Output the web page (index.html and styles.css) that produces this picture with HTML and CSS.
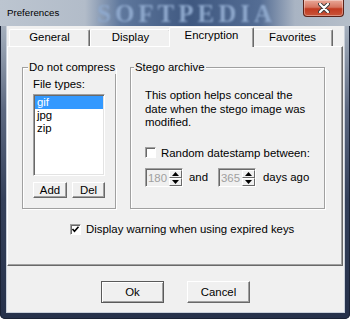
FILE: index.html
```html
<!DOCTYPE html>
<html>
<head>
<meta charset="utf-8">
<link rel="stylesheet" href="styles.css">
</head>
<body>
<div class="window">
  <div class="titlebar">
    <span class="title">Preferences</span>
    <span class="watermark">SOFTPEDIA</span>
    <div class="close">
      <svg width="12" height="10" viewBox="0 0 12 10">
        <path d="M2 1 L10 9 M10 1 L2 9" stroke="#3a3a3a" stroke-width="4" stroke-linecap="round"/>
        <path d="M2 1 L10 9 M10 1 L2 9" stroke="#fff" stroke-width="2.2" stroke-linecap="round"/>
      </svg>
    </div>
  </div>
  <div class="client">
    <div class="tabs">
      <div class="tab">General</div>
      <div class="tab">Display</div>
      <div class="tab active">Encryption</div>
      <div class="tab">Favorites</div>
    </div>
    <div class="panel">
      <div class="groups">
        <fieldset class="group g1">
          <legend>Do not compress</legend>
          <div class="g1-inner">
            <div class="lbl">File types:</div>
            <div class="listbox">
              <div class="item sel">gif</div>
              <div class="item">jpg</div>
              <div class="item">zip</div>
            </div>
            <div class="btnrow">
              <div class="btn add">Add</div>
              <div class="btn del">Del</div>
            </div>
          </div>
        </fieldset>
        <fieldset class="group g2">
          <legend>Stego archive</legend>
          <div class="g2-inner">
            <p class="desc">This option helps conceal the date when the stego image was modified.</p>
            <div class="cb-row">
              <span class="box"></span>
              <span>Random datestamp between:</span>
            </div>
            <div class="spin-row">
              <div class="spin">
                <span class="val">180</span>
                <span class="arrows">
                  <span class="arr"><svg width="7" height="4" viewBox="0 0 7 4"><path d="M0 4 L3.5 0 L7 4Z" fill="#000"/></svg></span>
                  <span class="arr"><svg width="7" height="4" viewBox="0 0 7 4"><path d="M0 0 L3.5 4 L7 0Z" fill="#000"/></svg></span>
                </span>
              </div>
              <span class="and">and</span>
              <div class="spin second">
                <span class="val">365</span>
                <span class="arrows">
                  <span class="arr"><svg width="7" height="4" viewBox="0 0 7 4"><path d="M0 4 L3.5 0 L7 4Z" fill="#000"/></svg></span>
                  <span class="arr"><svg width="7" height="4" viewBox="0 0 7 4"><path d="M0 0 L3.5 4 L7 0Z" fill="#000"/></svg></span>
                </span>
              </div>
              <span class="ago">days ago</span>
            </div>
          </div>
        </fieldset>
      </div>
      <div class="warn-row">
        <span class="box checked"><svg width="9" height="9" viewBox="0 0 9 9"><path d="M1.5 4 L3.5 6.2 L7.5 1.8" stroke="#000" stroke-width="1.6" fill="none"/></svg></span>
        <span>Display warning when using expired keys</span>
      </div>
    </div>
    <div class="footer">
      <div class="dlg-btn ok">Ok</div>
      <div class="dlg-btn cancel">Cancel</div>
    </div>
  </div>
</div>
</body>
</html>
```
FILE: styles.css
```css
html, body {
  margin: 0;
  padding: 0;
  background: #fff;
}
body {
  font-family: "Liberation Sans", Arial, sans-serif;
  font-size: 11.4px;
  color: #000;
}
.window {
  width: 350px;
  height: 319px;
  box-sizing: border-box;
  display: flex;
  flex-direction: column;
  padding: 0 6px 7px 7px;
  background: linear-gradient(180deg, #b9c2cd 0px, #9aa5b4 40px, #5c6880 110px, #34405a 200px, #26314a 319px);
  box-shadow: inset 0 0 0 1px #1a2235;
  border-radius: 0 0 5px 5px;
}
.titlebar {
  height: 26px;
  margin: 0 -6px 0 -7px;
  padding-left: 7px;
  display: flex;
  align-items: flex-start;
  position: relative;
  background: linear-gradient(90deg, #bcc5d0 0px, #b2bcc9 85px, #5f789d 120px, #3f5880 190px, #546d94 260px, #a9b4c3 295px, #b5bec9 350px);
}
.title {
  font-size: 9.7px;
  line-height: 26px;
  position: relative;
  z-index: 1;
}
.watermark {
  position: absolute;
  left: 97px;
  top: 1px;
  height: 25px;
  line-height: 25px;
  font-family: "Liberation Serif", serif;
  font-weight: bold;
  font-size: 25px;
  letter-spacing: 4px;
  color: #8ea8cc;
  filter: blur(1px);
}
.close {
  margin-left: auto;
  margin-right: 6px;
  width: 41px;
  height: 17px;
  box-sizing: border-box;
  border: 1px solid #5b2218;
  border-top: none;
  border-radius: 0 0 4px 4px;
  background: linear-gradient(180deg, #e9a898 0%, #d67560 45%, #c23a20 55%, #c8553a 100%);
  box-shadow: inset 0 0 0 1px rgba(255,255,255,0.35);
  display: flex;
  align-items: center;
  justify-content: center;
  position: relative;
  z-index: 1;
}
.client {
  flex: 1;
  background: #f0f0f0;
  display: flex;
  flex-direction: column;
  box-shadow: 0 0 0 1px #c9d0da;
}
.tabs {
  display: flex;
  align-items: flex-end;
  height: 20px;
  padding-left: 2px;
}
.tab {
  width: 81px;
  height: 17px;
  box-sizing: border-box;
  border: 1px solid;
  border-color: #fff #696969 transparent #fff;
  border-bottom: none;
  border-radius: 2px 2px 0 0;
  box-shadow: inset -1px 0 0 #a0a0a0;
  text-align: center;
  line-height: 14px;
  background: #f0f0f0;
}
.tab.active {
  width: 85px;
  height: 20px;
  margin: 0 -2px -1px;
  position: relative;
  z-index: 1;
}
.panel {
  width: 336px;
  height: 220px;
  box-sizing: border-box;
  border: 1px solid;
  border-color: #fff #696969 #696969 #fff;
  box-shadow: inset -1px -1px 0 #a0a0a0;
  padding: 13px 0 0 14px;
}
.groups {
  display: flex;
  gap: 14px;
  height: 149px;
}
.group {
  margin: 0;
  padding: 0;
  min-width: 0;
  box-sizing: border-box;
  border: 1px solid #a0a0a0;
  box-shadow: inset 1px 1px 0 #fff, 1px 1px 0 #fff;
}
.group legend {
  padding: 0 1px;
  line-height: 14px;
  white-space: nowrap;
  background: #f0f0f0;
}
.g1 { width: 94px; }
.g1 legend { margin-left: 5px; }
.g2 { width: 195px; }
.g2 legend { margin-left: 3px; }
.g1-inner {
  padding: 3px 0 0 10px;
}
.lbl { line-height: 14px; }
.listbox {
  width: 72px;
  height: 82px;
  margin-top: 3px;
  box-sizing: border-box;
  background: #fff;
  border: 1px solid;
  border-color: #a0a0a0 #fff #fff #a0a0a0;
  box-shadow: inset 1px 1px 0 #696969, inset -1px -1px 0 #e3e3e3;
  padding: 1px;
}
.item {
  height: 13px;
  line-height: 13px;
  padding-left: 2px;
}
.item.sel {
  background: #3399ff;
  color: #fff;
}
.btnrow {
  display: flex;
  gap: 5px;
  margin-top: 6px;
}
.btn, .dlg-btn {
  box-sizing: border-box;
  background: #f0f0f0;
  border: 1px solid;
  border-color: #fff #696969 #696969 #fff;
  box-shadow: inset -1px -1px 0 #a0a0a0;
  display: flex;
  align-items: center;
  justify-content: center;
}
.btn { height: 16px; }
.btn.add { width: 34px; }
.btn.del { width: 33px; }
.g2-inner {
  padding: 15px 0 0 14px;
}
.desc {
  margin: 0;
  width: 162px;
  line-height: 13.5px;
}
.cb-row {
  display: flex;
  align-items: center;
  gap: 5px;
  height: 14px;
  margin-top: 16px;
}
.box {
  width: 11px;
  height: 11px;
  box-sizing: border-box;
  background: #fff;
  border: 1px solid;
  border-color: #a0a0a0 #fff #fff #a0a0a0;
  box-shadow: inset 1px 1px 0 #696969;
  display: flex;
  align-items: center;
  justify-content: center;
  flex: none;
}
.spin-row {
  display: flex;
  align-items: center;
  margin-top: 8px;
}
.spin {
  display: flex;
  width: 38px;
  height: 19px;
  box-sizing: border-box;
  border: 1px solid;
  border-color: #a0a0a0 #fff #fff #a0a0a0;
  box-shadow: inset 1px 1px 0 #696969;
  background: #f0f0f0;
  padding: 1px 0 0 1px;
}
.val {
  flex: 1;
  color: #a0a0a0;
  padding-left: 1px;
  line-height: 16px;
}
.arrows {
  width: 13px;
  display: flex;
  flex-direction: column;
}
.arr {
  flex: 1;
  box-sizing: border-box;
  border: 1px solid;
  border-color: #fff #696969 #696969 #fff;
  background: #f0f0f0;
  display: flex;
  align-items: center;
  justify-content: center;
}
.and { margin-left: 6px; }
.spin.second { margin-left: 10px; }
.ago { margin-left: 7px; }
.warn-row {
  display: flex;
  align-items: center;
  gap: 5px;
  height: 14px;
  margin: 13px 0 0 48px;
}
.footer {
  flex: 1;
  display: flex;
  justify-content: center;
  align-items: flex-start;
  gap: 23px;
  padding-top: 15px;
}
.dlg-btn {
  width: 63px;
  height: 22px;
}
.dlg-btn.ok {
  border-color: #5a5a5a;
  box-shadow: inset 1px 1px 0 #fff, inset -1px -1px 0 #a0a0a0;
}
```
